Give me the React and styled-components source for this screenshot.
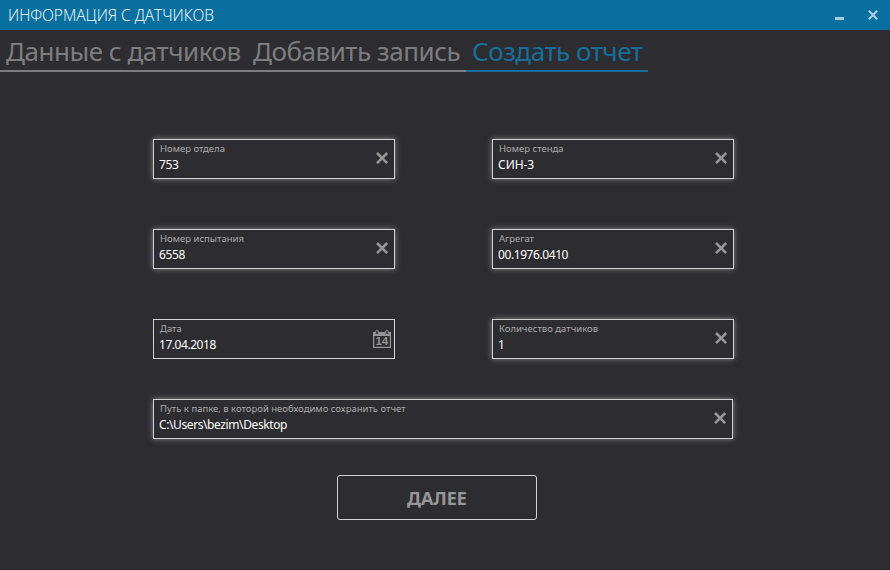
import React from 'react';
import styled, { createGlobalStyle } from 'styled-components';

const GlobalStyle = createGlobalStyle`
  * { box-sizing: border-box; }
  body { margin: 0; background: #2d2c30; }
`;

const Window = styled.div`
  display: flex;
  flex-direction: column;
  width: 890px;
  height: 570px;
  overflow: hidden;
  background: #2d2c30;
  border-bottom: 1px solid #252327;
  font-family: 'Noto Sans', 'Open Sans', sans-serif;
`;

const TitleBar = styled.header`
  display: flex;
  align-items: center;
  justify-content: space-between;
  height: 30px;
  padding: 0 11px 0 8px;
  background: #086f9e;
`;

const Title = styled.h1`
  margin: 0;
  font: 300 15.5px/30px 'Open Sans', sans-serif;
  letter-spacing: -0.03px;
  color: #fff;
`;

const WindowButtons = styled.div`
  display: flex;
  gap: 23px;
`;

const IconButton = styled.button`
  display: flex;
  padding: 0;
  border: 0;
  background: none;
  color: ${({ $color }) => $color};
`;

const Tabs = styled.nav`
  display: flex;
  height: 42px;
`;

const Tab = styled.a`
  width: ${({ $width }) => $width}px;
  height: 42px;
  padding-left: 6px;
  border-bottom: 2px solid ${({ $active }) => ($active ? '#156f9b' : '#7d7d7f')};
  color: ${({ $active }) => ($active ? '#156f9b' : '#7d7d7f')};
  font-size: 26px;
  line-height: 43px;
  letter-spacing: -0.47px;
  white-space: nowrap;
`;

const Form = styled.form`
  display: grid;
  grid-template-columns: 242px 242px;
  grid-template-rows: 40px 40px 40px 40px 45px;
  column-gap: 97px;
  row-gap: 50px;
  margin: 67px 0 0 153px;
`;

const Field = styled.label`
  display: flex;
  align-items: center;
  justify-content: space-between;
  width: ${({ $wide }) => ($wide ? 580 : 242)}px;
  height: 40px;
  margin-top: ${({ $wide }) => ($wide ? -10 : 0)}px;
  padding: 0 ${({ $flat }) => ($flat ? 3 : 5)}px 0 5px;
  border: 1px solid #d3d3d4;
  box-shadow: ${({ $flat }) => ($flat ? 'none' : '0 0 6px rgba(255, 255, 255, 0.42)')};
  background: #2d2c30;
  grid-column: ${({ $wide }) => ($wide ? '1 / -1' : 'auto')};
`;

const FieldText = styled.span`
  display: flex;
  flex-direction: column;
  height: 38px;
`;

const Caption = styled.span`
  height: 16px;
  padding-left: 1px;
  font-size: 9.5px;
  line-height: 17px;
  color: #aaaaab;
  white-space: nowrap;
`;

const Value = styled.span`
  font-size: 12px;
  line-height: 17px;
  letter-spacing: ${({ $spacing }) => $spacing}px;
  color: #fff;
  white-space: nowrap;
`;

const NextButton = styled.button`
  grid-column: 1 / -1;
  width: 200px;
  height: 45px;
  margin: -24px 0 0 184px;
  padding: 0;
  border: 1px solid #d3d3d4;
  border-radius: 3px;
  background: transparent;
  font: 700 18px/45px 'Noto Sans', sans-serif;
  color: #969697;
`;

const ClearIcon = () => (
  <svg width="14" height="14" viewBox="0 0 14 14" fill="none" stroke="currentColor" strokeWidth="2.6">
    <path d="M2 1 12.2 11.2M12.2 1 2 11.2" />
  </svg>
);

const CloseIcon = () => (
  <svg width="12" height="12" viewBox="0 0 12 12" fill="none" stroke="currentColor" strokeWidth="2.3">
    <path d="M1.8 1.8 10.2 10.2M10.2 1.8 1.8 10.2" />
  </svg>
);

const Minimize = () => (
  <svg width="9" height="12" viewBox="0 0 9 12" fill="currentColor">
    <path d="M0 8h9v3H0z" />
  </svg>
);

const DayText = styled.text`
  font: 700 11.5px 'Liberation Sans', sans-serif;
`;

const Calendar = () => (
  <svg width="18" height="18" viewBox="0 0 18 18" fill="currentColor">
    <path d="M0 2h2.5v2h3V2h7v2h3V2H18v16H0zM1.2 6v10.8h15.6V6z" fillRule="evenodd" />
    <path d="M2.8 3.6V1q0-.5.5-.5h1.4q.5 0 .5.5v2.6M12.8 3.6V1q0-.5.5-.5h1.4q.5 0 .5.5v2.6" fill="none" stroke="currentColor" />
    <DayText x="8.8" y="15.2" textAnchor="middle">14</DayText>
  </svg>
);

const tabs = [
  { label: 'Данные с датчиков', width: 247 },
  { label: 'Добавить запись', width: 219 },
  { label: 'Создать отчет', width: 182, active: true },
];

const fields = [
  { label: 'Номер отдела', value: '753', spacing: -0.4 },
  { label: 'Номер стенда', value: 'СИН-3', spacing: -0.05 },
  { label: 'Номер испытания', value: '6558', spacing: -0.4 },
  { label: 'Агрегат', value: '00.1976.0410', spacing: -0.42 },
  { label: 'Дата', value: '17.04.2018', spacing: -0.45, date: true },
  { label: 'Количество датчиков', value: '1', spacing: 0 },
  {
    label: 'Путь к папке, в которой необходимо сохранить отчет',
    value: 'C:\\Users\\bezim\\Desktop',
    spacing: -0.4,
    wide: true,
  },
];

export default function App() {
  return (
    <Window>
      <GlobalStyle />
      <TitleBar>
        <Title>ИНФОРМАЦИЯ С ДАТЧИКОВ</Title>
        <WindowButtons>
          <IconButton $color="#a4cddd" aria-label="Свернуть"><Minimize /></IconButton>
          <IconButton $color="#a4cddd" aria-label="Закрыть"><CloseIcon /></IconButton>
        </WindowButtons>
      </TitleBar>
      <Tabs>
        {tabs.map((tab) => (
          <Tab key={tab.label} $width={tab.width} $active={tab.active}>{tab.label}</Tab>
        ))}
      </Tabs>
      <Form>
        {fields.map((field) => (
          <Field key={field.label} $wide={field.wide} $flat={field.date}>
            <FieldText>
              <Caption>{field.label}</Caption>
              <Value $spacing={field.spacing}>{field.value}</Value>
            </FieldText>
            <IconButton type="button" $color="#969697">
              {field.date ? <Calendar /> : <ClearIcon />}
            </IconButton>
          </Field>
        ))}
        <NextButton type="button">ДАЛЕЕ</NextButton>
      </Form>
    </Window>
  );
}
